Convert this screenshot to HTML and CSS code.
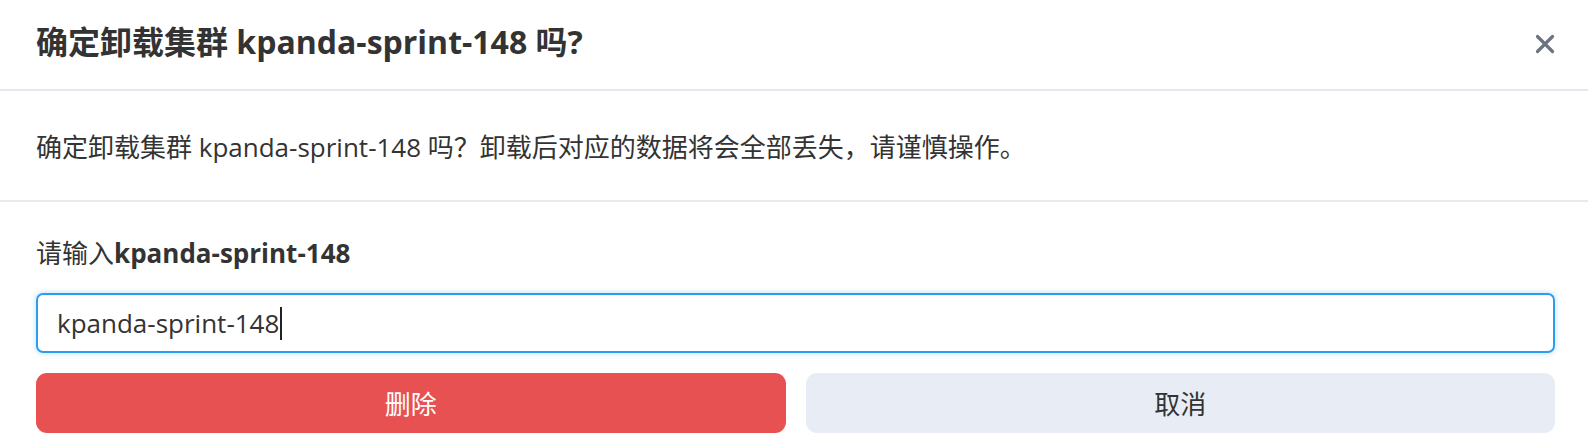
FILE: index.html
```html
<!DOCTYPE html>
<html lang="zh-CN">
<head>
<meta charset="utf-8">
<title>确定卸载集群</title>
<link rel="stylesheet" href="styles.css">
</head>
<body>
<div class="dialog">
  <div class="header">
    <h1 class="title">确定卸载集群 kpanda-sprint-148 吗?</h1>
    <button class="close" aria-label="关闭">
      <svg width="20" height="20" viewBox="0 0 20 20"><path d="M2.5 2.5L17.5 17.5M17.5 2.5L2.5 17.5" stroke="#6b7280" stroke-width="3.2" stroke-linecap="round"/></svg>
    </button>
  </div>
  <div class="message">确定卸载集群 kpanda-sprint-148 吗？卸载后对应的数据将会全部丢失，请谨慎操作。</div>
  <div class="form">
    <div class="label">请输入<b>kpanda-sprint-148</b></div>
    <div class="input"><span class="value">kpanda-sprint-148</span><span class="caret"></span></div>
    <div class="actions">
      <button class="btn btn-danger">删除</button>
      <button class="btn btn-cancel">取消</button>
    </div>
  </div>
</div>
</body>
</html>
```

FILE: styles.css
```css
html, body {
  margin: 0;
  padding: 0;
  background: #ffffff;
}
body {
  font-family: "Open Sans", "Noto Sans CJK SC", sans-serif;
  color: #333333;
}
.dialog {
  width: 1588px;
}
.header {
  height: 89px;
  padding: 0 33px 0 36px;
  display: flex;
  align-items: center;
  justify-content: space-between;
  border-bottom: 2px solid #e6e8ef;
}
.title {
  margin: 0;
  font-size: 32px;
  line-height: 40px;
  font-weight: 700;
  color: #333333;
  position: relative;
  top: -3px;
}
.close {
  border: 0;
  background: transparent;
  padding: 0;
  width: 20px;
  height: 20px;
  display: flex;
  align-items: center;
  justify-content: center;
  position: relative;
  top: -1px;
}
.message {
  height: 109px;
  padding: 0 33px 0 36px;
  display: flex;
  align-items: center;
  font-size: 26px;
  border-bottom: 2px solid #e6e9ee;
}
.form {
  padding: 34px 33px 0 36px;
}
.label {
  font-size: 26px;
  line-height: 34px;
}
.label b {
  font-weight: 700;
}
.input {
  margin-top: 23px;
  height: 60px;
  box-sizing: border-box;
  border: 2px solid #2c9cef;
  border-radius: 7px;
  box-shadow: 0 0 5px 1px rgba(44, 156, 239, 0.25);
  display: flex;
  align-items: center;
  padding-left: 19px;
  font-size: 26px;
  color: #333333;
}
.caret {
  display: inline-block;
  width: 2px;
  height: 33px;
  background: #222222;
  margin-left: 1px;
}
.actions {
  margin-top: 20px;
  display: grid;
  grid-template-columns: 1fr 1fr;
  gap: 20px;
}
.btn {
  height: 60px;
  border: 0;
  border-radius: 11px;
  font-family: "Open Sans", "Noto Sans CJK SC", sans-serif;
  font-size: 26px;
}
.btn-danger {
  background: #e85151;
  color: #ffffff;
}
.btn-cancel {
  background: #e8edf5;
  color: #333333;
}
```
